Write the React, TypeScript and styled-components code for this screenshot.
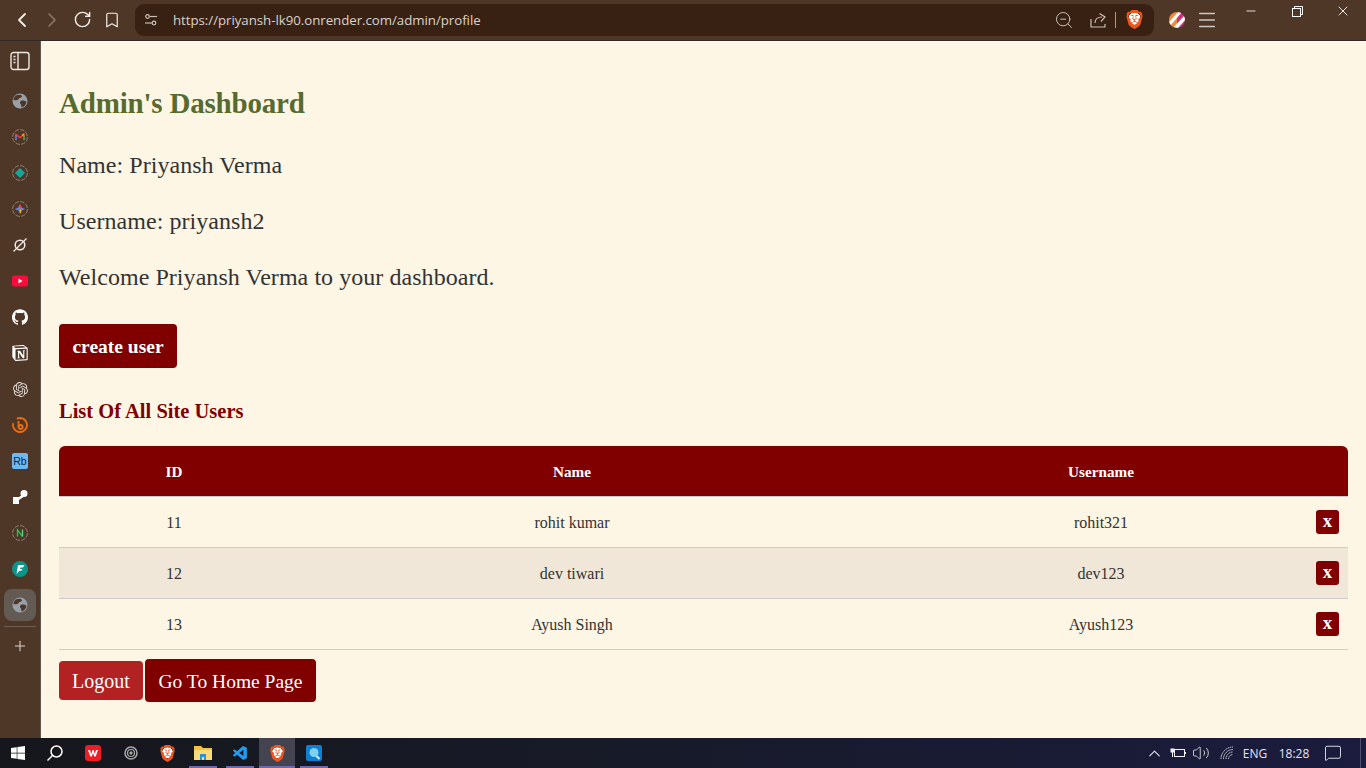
import React from "react";
import styled, { createGlobalStyle } from "styled-components";
import {
  ChevronLeft, ChevronRight, RotateCw, Bookmark, ZoomOut, Menu, Minus, X, Plus, ChevronUp, Volume2, MessageSquare,
} from "lucide-react";
import { SiBrave, SiGithub, SiNotion, SiOpenai, SiYoutube } from "react-icons/si";
import { VscVscode } from "react-icons/vsc";
import { FaWindows } from "react-icons/fa";

const Global = createGlobalStyle`
  html, body { margin: 0; padding: 0; height: 100%; overflow: hidden; }
  * { box-sizing: border-box; }
`;

const Page = styled.div`
  width: 1366px; height: 768px; display: flex; flex-direction: column; overflow: hidden;
  font-family: "Liberation Serif", "Times New Roman", serif; background: #fef6e4;
`;
const TopBar = styled.header`
  height: 41px; flex: none; display: flex; align-items: center; padding: 0 0 1px 7px;
  background: #4f3727; border-bottom: 1px solid #2f2a28; color: #e6e0da;
`;
const NavButton = styled.span<{ $dim?: boolean }>`
  width: 30px; height: 30px; display: flex; align-items: center; justify-content: center;
  color: ${(p) => (p.$dim ? "#8a7768" : "#f2eeea")};
`;
const AddressBar = styled.div`
  flex: 0 0 1019px; height: 32px; margin-left: 8px; display: flex; align-items: center;
  background: #382113; border-radius: 9px; padding: 0 10px 0 9px; color: #c8bfb6;
`;
const UrlText = styled.span`
  margin-left: 15px; font: 13.3px "Open Sans", "Noto Sans", sans-serif; color: #d9d2cc; flex: 1; letter-spacing: -0.05px;
`;
const BarIcon = styled.span<{ $gap?: number }>`
  display: flex; align-items: center; justify-content: center; margin-left: ${(p) => p.$gap ?? 0}px;
`;
const BraveMark = styled.span<{ $size: number }>`
  width: ${(p) => p.$size}px; height: ${(p) => p.$size}px; display: flex; flex: none;
  background: radial-gradient(circle at 50% 45%, #fff 0 42%, transparent 44%);
`;
const Divider = styled.span`
  width: 1px; height: 16px; background: #a89a8e; margin-left: 8px;
`;
const WindowControls = styled.div`
  margin-left: auto; display: flex; align-self: flex-start; color: #ffffff;
`;
const WindowButton = styled.span`
  width: 46px; height: 22px; display: flex; align-items: center; justify-content: center;
`;
const Body = styled.div`
  flex: 1; display: flex; min-height: 0;
`;
const Sidebar = styled.aside`
  width: 41px; flex: none; display: flex; flex-direction: column; align-items: center;
  padding-top: 10px; background: #4f3727; border-right: 1px solid #5e5650; color: #f0ece8;
`;
const PanelSlot = styled.span`
  height: 20px; margin-bottom: 12px; display: flex; align-items: center;
`;
const SideSlot = styled.span<{ $active?: boolean }>`
  width: 32px; height: 36px; display: flex; align-items: center; justify-content: center; border-radius: 8px; position: relative;
  ${(p) => p.$active && `
    height: 32px; margin: 2px 0; background: #635a54;
  `}
`;
const SideRule = styled.span`
  width: 32px; height: 1px; background: #6f5f53; margin: 3px 0 0;
`;
const AddSlot = styled.span`
  margin-top: 11px; color: #d9d2cc; display: flex;
`;
const Content = styled.main`
  flex: 1; padding: 43px 18px 0; background: #fef6e4; color: #333;
`;
const Heading = styled.h1`
  margin: 0 0 28px; font-size: 29px; line-height: 38px; font-weight: 700; color: #556b2f; letter-spacing: -0.2px;
`;
const Info = styled.p`
  margin: 0 0 26px; font-size: 24px; line-height: 30px; color: #333; letter-spacing: 0.05px;
`;
const PrimaryButton = styled.button`
  display: block; margin: 32px 0 30px; height: 44px; width: 118px; padding: 2px 0 0; border: 0; border-radius: 4px;
  background: #800000; color: #fff; font: 700 19.5px "Liberation Serif", serif;
`;
const SectionTitle = styled.h2`
  margin: 0 0 22px; font-size: 20.5px; line-height: 26px; font-weight: 700; color: #800000;
`;
const Table = styled.table`
  width: 1289px; table-layout: fixed; border-collapse: separate; border-spacing: 0;
`;
const HeadCell = styled.th<{ $w?: number; $pl?: number }>`
  ${(p) => p.$w && `width: ${p.$w}px;`}
  height: 51px; padding: 2px 0 0 ${(p) => p.$pl ?? 0}px; background: #800000; color: #fff;
  font-size: 15.2px; font-weight: 700; text-align: center; border-bottom: 1px solid #ccc;
  &:first-child { border-top-left-radius: 6px; }
  &:last-child { border-top-right-radius: 6px; }
`;
const Row = styled.tr<{ $shade?: boolean }>`
  background: ${(p) => (p.$shade ? "#f0e7d8" : "transparent")};
`;
const Cell = styled.td<{ $pl?: number }>`
  height: 51px; padding: 2px 0 0 ${(p) => p.$pl ?? 0}px; text-align: center; font-size: 16px; color: #333; border-bottom: 1px solid #ccc;
`;
const ActionCell = styled.td`
  height: 51px; padding: 0 9px 0 0; border-bottom: 1px solid #ccc; text-align: right;
`;
const DeleteButton = styled.button`
  width: 23px; height: 24px; padding: 0 0 2px; border: 0; border-radius: 3px; background: #800000; color: #fff;
  font: 700 19px "Liberation Serif", serif; vertical-align: middle;
`;
const Actions = styled.div`
  margin-top: 9px; display: flex; align-items: center; gap: 2px;
`;
const LogoutButton = styled.button`
  width: 84px; height: 39px; padding: 2px 0 0; border: 0; border-radius: 4px; background: #b22222; color: #fff;
  font: 20px "Liberation Serif", serif;
`;
const HomeButton = styled.button`
  width: 171px; height: 43px; padding: 2px 0 0; border: 0; border-radius: 4px; background: #800000; color: #fff;
  font: 19.5px "Liberation Serif", serif;
`;
const Taskbar = styled.footer`
  height: 30px; flex: none; display: flex; align-items: center;
  background: linear-gradient(90deg, #16171c 0%, #171a28 45%, #1b1c3e 100%); color: #fff;
`;
const TaskSlot = styled.span<{ $w: number; $run?: boolean; $active?: boolean; $ml?: number }>`
  width: ${(p) => p.$w}px; height: 30px; margin-left: ${(p) => p.$ml ?? 0}px; flex: none; display: flex; align-items: center; justify-content: center; position: relative;
  background: ${(p) => (p.$active ? "#43444f" : "transparent")};
  ${(p) => p.$run && `border-bottom: 2px solid #6f68b0; padding-top: 2px;`}
`;
const Tray = styled.div`
  margin-left: auto; display: flex; align-items: center; color: #eceaf2; height: 30px; padding-right: 5px;
`;
const TrayIcon = styled.span<{ $w: number }>`
  width: ${(p) => p.$w}px; display: flex; align-items: center; justify-content: center;
`;
const TrayText = styled.span<{ $w: number }>`
  width: ${(p) => p.$w}px; text-align: center; font: 12px "Open Sans", "Noto Sans", sans-serif; color: #e6e4ee;
`;
const NotifyEdge = styled.span`
  width: 1px; height: 30px; background: #4e4e70;
`;

const Globe = () => (
  <svg width="16" height="16" viewBox="0 0 16 16">
    <circle cx="8" cy="8" r="7.500" fill="#98a0aa" />
    <path d="M4 2.500c2-1 5-1 6 .5 0 2-3 1.500-3.500 3S3 7.500 1.500 7C1.500 5 2.500 3.500 4 2.500zM10.500 7.500c2 0 3.500.5 4 1.500-.5 2.500-2 4.500-4.500 5.500-1-1-.5-2.500-1.500-3.500s-.5-3.500 2-3.500z" fill="#4f3727" />
  </svg>
);
const Ring = ({ children }: { children: React.ReactNode }) => (
  <svg width="16" height="16" viewBox="0 0 16 16">
    <circle cx="8" cy="8" r="7.400" fill="none" stroke="#8d8079" strokeWidth="1" strokeDasharray="4.500 1.300" />
    {children}
  </svg>
);
const SidebarGlyphs = [
  <Globe key="g1" />,
  <Ring key="gm">
    <path d="M4 11V5.500l4 3 4-3V11" fill="none" stroke="#ea4335" strokeWidth="1.500" />
    <path d="M4 11V6" stroke="#4285f4" strokeWidth="1.500" />
    <path d="M12 11V6" stroke="#34a853" strokeWidth="1.500" />
    <path d="M10 6.500l2-1.500" stroke="#fbbc04" strokeWidth="1.500" />
  </Ring>,
  <Ring key="tl"><path d="M8 3l5 5-5 5-5-5z" fill="#12a8a0" /></Ring>,
  <Ring key="gem">
    <path d="M8 3L9.600 6.400 13 8 9.600 9.600 8 13 6.400 9.600 3 8 6.400 6.400z" fill="#5b8def" />
    <path d="M8 3L9.600 6.400 8 8z" fill="#ea4335" /><path d="M3 8L6.400 9.600 8 8z" fill="#34a853" />
    <path d="M8 13L9.600 9.600 8 8z" fill="#fbbc04" />
  </Ring>,
  <svg key="o" width="16" height="16" viewBox="0 0 16 16" fill="none" stroke="#efeae6" strokeWidth="1.500">
    <circle cx="8" cy="8" r="4.800" /><path d="M1.500 14.500L14.500 1.500" strokeWidth="1.200" />
  </svg>,
  <svg key="yt" width="16" height="12" viewBox="0 0 16 12">
    <rect width="16" height="11" y=".5" rx="2.500" fill="#ff0a3c" /><path d="M6.500 3.500l4 2.500-4 2.500z" fill="#fff" />
  </svg>,
  <SiGithub key="gh" size={16} color="#fff" />,
  <SiNotion key="no" size={16} color="#fff" />,
  <SiOpenai key="ai" size={15} color="#e2dcd6" />,
  <svg key="b" width="16" height="16" viewBox="0 0 16 16" fill="none" stroke="#f26c0d" strokeWidth="1.800">
    <circle cx="8" cy="8" r="7" strokeDasharray="32 6" transform="rotate(-70 8 8)" />
    <path d="M6.500 4v6.500" /><circle cx="8.600" cy="10" r="2" />
  </svg>,
  <svg key="rb" width="16" height="16" viewBox="0 0 16 16">
    <rect width="16" height="16" rx="2" fill="#6cb8f5" />
    <text x="8" y="11.500" textAnchor="middle" fontFamily="Liberation Sans" fontSize="10.500" fill="#10243a">Rb</text>
  </svg>,
  <svg key="sh" width="16" height="16" viewBox="0 0 16 16" fill="#fff">
    <path d="M1 8h6v7H1z" /><circle cx="12" cy="4.500" r="3.500" /><path d="M7 8l3-2 1.500 2L7 11z" />
  </svg>,
  <Ring key="nx">
    <path d="M5.500 11.500V5l5 6.500" fill="none" stroke="#22c55e" strokeWidth="1.300" />
    <path d="M10.500 4.500v7" stroke="#4ade80" strokeWidth="1.300" />
  </Ring>,
  <svg key="f" width="16" height="16" viewBox="0 0 16 16">
    <circle cx="8" cy="8" r="8" fill="#0d9488" />
    <path d="M6 4h6.500L11 6.500H8.500L8 8h2.500l-1 1.800H7.300L4.500 13z" fill="#fff" />
  </svg>,
];

const users = [
  { id: 11, name: "rohit kumar", username: "rohit321" },
  { id: 12, name: "dev tiwari", username: "dev123" },
  { id: 13, name: "Ayush Singh", username: "Ayush123" },
];

export default function App() {
  return (
    <Page>
      <Global />
      <TopBar>
        <NavButton><ChevronLeft size={24} strokeWidth={1.800} /></NavButton>
        <NavButton $dim><ChevronRight size={24} strokeWidth={1.600} /></NavButton>
        <NavButton><RotateCw size={19} strokeWidth={1.800} /></NavButton>
        <NavButton><Bookmark size={18} strokeWidth={1.600} /></NavButton>
        <AddressBar>
          <svg width="14" height="14" viewBox="0 0 14 14" fill="none" stroke="#c8bfb6" strokeWidth="1.200">
            <circle cx="3.500" cy="3.500" r="1.800" /><path d="M5.500 3.500H13" />
            <circle cx="10" cy="10" r="1.800" /><path d="M1 10h7" />
          </svg>
          <UrlText>https://priyansh-lk90.onrender.com/admin/profile</UrlText>
          <BarIcon><ZoomOut size={20} strokeWidth={1.200} /></BarIcon>
          <BarIcon $gap={16}>
            <svg width="17" height="16" viewBox="0 0 17 16" fill="none" stroke="#c8bfb6" strokeWidth="1.200">
              <path d="M5 11c0-4 3-6 7-6M9.500 1.500L15 5l-4 4.500M1 7v8h14v-3" />
            </svg>
          </BarIcon>
          <Divider />
          <BarIcon $gap={9}><BraveMark $size={19}><SiBrave size={19} color="#f0561d" /></BraveMark></BarIcon>
        </AddressBar>
        <BarIcon $gap={15}>
          <svg width="16" height="16" viewBox="0 0 16 16">
            <defs><clipPath id="ball"><circle cx="8" cy="8" r="8" /></clipPath></defs>
            <g clipPath="url(#ball)">
              <rect width="8" height="16" fill="#f08a3c" /><rect x="8" width="8" height="16" fill="#c8327e" />
              <path d="M-1 11L10 -1l3 1L1 14zM5 15L15 4l2 3-8 9z" fill="#fff" />
            </g>
          </svg>
        </BarIcon>
        <BarIcon $gap={11}><Menu size={22} strokeWidth={1.600} color="#cfc8c2" /></BarIcon>
        <WindowControls>
          <WindowButton><Minus size={14} strokeWidth={1.400} /></WindowButton>
          <WindowButton>
            <svg width="11" height="11" viewBox="0 0 11 11" fill="none" stroke="#ffffff">
              <rect x=".5" y="2.500" width="8" height="8" /><path d="M2.500 2.500V.5h8v8H8.500" />
            </svg>
          </WindowButton>
          <WindowButton><X size={16} strokeWidth={1.300} /></WindowButton>
        </WindowControls>
      </TopBar>
      <Body>
        <Sidebar>
          <PanelSlot>
            <svg width="20" height="20" viewBox="0 0 20 20" fill="none" stroke="#ece8e4" strokeWidth="1.400">
              <rect x="1" y="1.500" width="18" height="17" rx="2.500" /><path d="M8 1.500v17" />
              <path d="M3.500 5.500h2M3.500 8.500h2M3.500 11.500h2" strokeWidth="1.500" />
            </svg>
          </PanelSlot>
          {SidebarGlyphs.map((g, i) => <SideSlot key={i}>{g}</SideSlot>)}
          <SideSlot $active><Globe /></SideSlot>
          <SideRule />
          <AddSlot><Plus size={16} strokeWidth={1.600} /></AddSlot>
        </Sidebar>
        <Content>
          <Heading>Admin's Dashboard</Heading>
          <Info>Name: Priyansh Verma</Info>
          <Info>Username: priyansh2</Info>
          <Info>Welcome Priyansh Verma to your dashboard.</Info>
          <PrimaryButton>create user</PrimaryButton>
          <SectionTitle>List Of All Site Users</SectionTitle>
          <Table>
            <thead>
              <tr>
                <HeadCell $w={230}>ID</HeadCell>
                <HeadCell $w={566}>Name</HeadCell>
                <HeadCell $w={449} $pl={43}>Username</HeadCell>
                <HeadCell $w={44} aria-label="actions" />
              </tr>
            </thead>
            <tbody>
              {users.map((u, i) => (
                <Row key={u.id} $shade={i === 1}>
                  <Cell>{u.id}</Cell>
                  <Cell>{u.name}</Cell>
                  <Cell $pl={43}>{u.username}</Cell>
                  <ActionCell><DeleteButton>x</DeleteButton></ActionCell>
                </Row>
              ))}
            </tbody>
          </Table>
          <Actions>
            <LogoutButton>Logout</LogoutButton>
            <HomeButton>Go To Home Page</HomeButton>
          </Actions>
        </Content>
      </Body>
      <Taskbar>
        <TaskSlot $w={36}><FaWindows size={16} /></TaskSlot>
        <TaskSlot $w={38}>
          <svg width="18" height="18" viewBox="0 0 18 18" fill="none" stroke="#fff" strokeWidth="1.500">
            <circle cx="10.500" cy="7.500" r="5.500" /><path d="M6.500 11.500L1.500 16.500" />
          </svg>
        </TaskSlot>
        <TaskSlot $w={38}>
          <svg width="16" height="16" viewBox="0 0 16 16">
            <rect width="16" height="16" rx="3" fill="#ee1c25" />
            <path d="M3 5h2l1.200 4L7.500 5h1.200l1.200 4L11 5h2l-2.300 6.500H9.200L8 8 6.800 11.500H5.300z" fill="#fff" />
          </svg>
        </TaskSlot>
        <TaskSlot $w={37}>
          <svg width="14" height="14" viewBox="0 0 14 14" fill="none" stroke="#a8a8a8">
            <circle cx="7" cy="7" r="6" strokeWidth="1.500" /><circle cx="7" cy="7" r="3.500" strokeWidth="1.200" /><circle cx="7" cy="7" r="1.200" fill="#a8a8a8" />
          </svg>
        </TaskSlot>
        <TaskSlot $w={37}><BraveMark $size={17}><SiBrave size={17} color="#f0561d" /></BraveMark></TaskSlot>
        <TaskSlot $w={28} $run $ml={3}>
          <svg width="18" height="16" viewBox="0 0 18 16">
            <path d="M0 1h7l2 2h9v12H0z" fill="#f6c243" /><path d="M0 5h18v10H0z" fill="#fadb7c" /><path d="M6 9h6v6h-2v-3H8v3H6z" fill="#2f8fd8" />
          </svg>
        </TaskSlot>
        <TaskSlot $w={28} $run $ml={9}><VscVscode size={17} color="#1f9cf0" /></TaskSlot>
        <TaskSlot $w={36} $run $active $ml={5}>
          <BraveMark $size={17}><SiBrave size={17} color="#f0561d" /></BraveMark>
        </TaskSlot>
        <TaskSlot $w={28} $run $ml={5}>
          <svg width="16" height="16" viewBox="0 0 16 16">
            <rect width="16" height="16" rx="2" fill="#0f7fd0" /><circle cx="8" cy="7.500" r="4.500" fill="#7fd0f5" /><path d="M10.500 11l3 3" stroke="#d3f0fb" strokeWidth="2" />
          </svg>
        </TaskSlot>
        <Tray>
          <TrayIcon $w={24}><ChevronUp size={19} strokeWidth={1.300} /></TrayIcon>
          <TrayIcon $w={24}>
            <svg width="16" height="12" viewBox="0 0 16 12" fill="none" stroke="#f4f2f8">
              <rect x="4.500" y="2.500" width="10" height="7" /><path d="M15.500 5v2" /><rect x="1" y="2" width="3" height="3" fill="#f4f2f8" /><path d="M2.500 5v5" />
            </svg>
          </TrayIcon>
          <TrayIcon $w={22}><Volume2 size={18} strokeWidth={1.100} /></TrayIcon>
          <TrayIcon $w={30}>
            <svg width="14" height="14" viewBox="0 0 14 14" fill="none" stroke="#dad8e2">
              <path d="M1 13A12 12 0 0 1 13 1M3.500 13A9.500 9.500 0 0 1 13 3.500M6 13a7 7 0 0 1 7-7M8.500 13A4.500 4.500 0 0 1 13 8.500" strokeDasharray="1.500 .7" />
            </svg>
          </TrayIcon>
          <TrayText $w={26}>ENG</TrayText>
          <TrayText $w={52}>18:28</TrayText>
          <TrayIcon $w={26}><MessageSquare size={18} strokeWidth={1.200} /></TrayIcon>
          <TrayIcon $w={14} />
          <NotifyEdge />
        </Tray>
      </Taskbar>
    </Page>
  );
}
